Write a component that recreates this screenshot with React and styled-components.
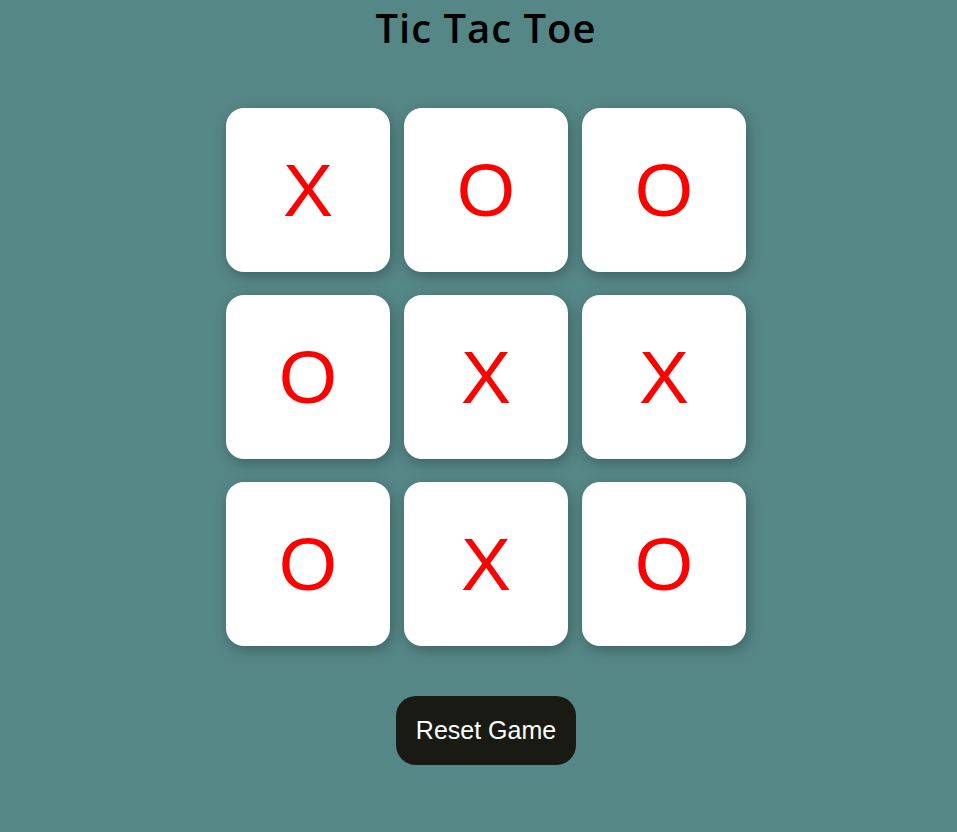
import React, { useState } from 'react';
import styled, { createGlobalStyle } from 'styled-components';

const GlobalStyle = createGlobalStyle`
	html, body {
		margin: 0;
		background: #568787;
	}
	body {
		font-family: "Liberation Sans", Arial, sans-serif;
	}
`;

const Page = styled.div`
	display: flex;
	flex-direction: column;
	align-items: center;
	padding-left: 15px;
	min-height: 832px;
	box-sizing: border-box;
`;

const Title = styled.h1`
	margin: 0;
	font-family: "Open Sans", sans-serif;
	font-weight: 600;
	font-size: 40px;
	line-height: 55px;
	letter-spacing: 1px;
	color: #000;
`;

const Board = styled.div`
	display: grid;
	grid-template-columns: repeat(3, 164px);
	grid-auto-rows: 164px;
	column-gap: 14px;
	row-gap: 23px;
	margin-top: 53px;
`;

const Cell = styled.button`
	display: flex;
	align-items: center;
	justify-content: center;
	border: none;
	border-radius: 18px;
	background: #fff;
	box-shadow: 2px 4px 14px rgba(0, 0, 0, 0.28);
	font-family: "Liberation Sans", Arial, sans-serif;
	font-size: 75px;
	color: #ff0000;
	padding: 0;
	cursor: pointer;
`;

const ResetButton = styled.button`
	margin-top: 50px;
	padding: 21px 20px;
	border: none;
	border-radius: 20px;
	background: #1a1a14;
	color: #fff;
	font-family: "Liberation Sans", Arial, sans-serif;
	font-size: 25px;
	line-height: 27px;
	cursor: pointer;
`;

const initial = ['X', 'O', 'O', 'O', 'X', 'X', 'O', 'X', 'O'];

export default function App() {
	const [cells, setCells] = useState(initial);

	return (
		<>
			<GlobalStyle />
			<Page>
				<Title>Tic Tac Toe</Title>
				<Board>
					{cells.map((v, i) => (
						<Cell key={i}>{v}</Cell>
					))}
				</Board>
				<ResetButton onClick={() => setCells(initial)}>Reset Game</ResetButton>
			</Page>
		</>
	);
}
